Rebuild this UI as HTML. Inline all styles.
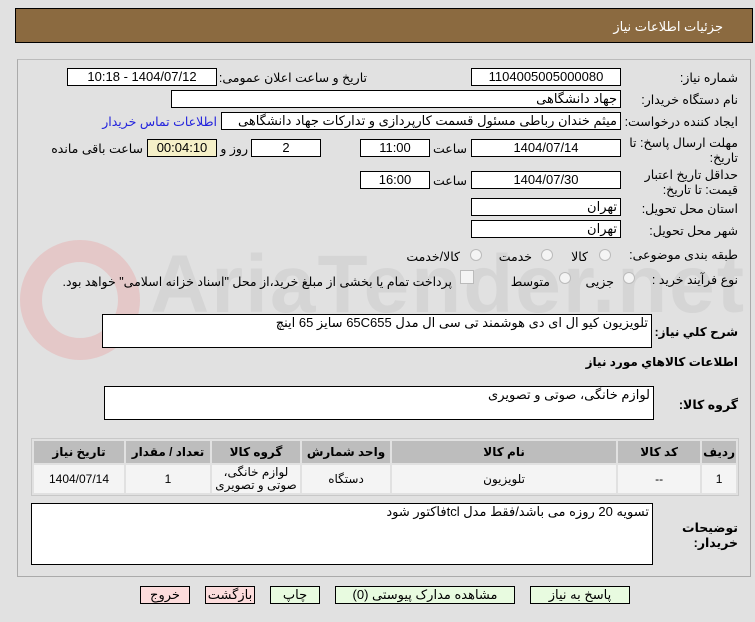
<!DOCTYPE html>
<html><head><meta charset="utf-8"><style>
body{margin:0;width:755px;height:622px;background:#e1e1e1;font-family:"Liberation Sans","DejaVu Sans",sans-serif;font-size:12px;color:#000;position:relative;overflow:hidden;direction:rtl}
.a{position:absolute;white-space:nowrap}
.b{position:absolute;background:#fff;border:1px solid #000;box-sizing:border-box;height:18px;line-height:16px;text-align:center;font-size:13px}
.b.r{text-align:right;padding-right:3px}
.l{position:absolute;white-space:nowrap;font-size:12.5px}
.rad{position:absolute;width:12px;height:12px;border-radius:50%;border:1px solid #bbb;background:#f4f4f4;box-sizing:border-box}
.btn{position:absolute;top:586px;height:18px;border:1px solid #000;box-sizing:border-box;text-align:center;line-height:16px;font-size:13px}
table{border-collapse:separate;border-spacing:2px}
</style></head><body>
<div class="a" style="left:15px;top:8px;width:738px;height:35px;background:#8b6a40;border:1px solid #000;box-sizing:border-box"></div>
<div class="a" style="right:32px;top:19px;color:#fff;font-size:13px">جزئیات اطلاعات نیاز</div>
<div class="a" style="left:17px;top:59px;width:734px;height:518px;border:1px solid #aaa;border-top-color:#bbb;box-sizing:border-box;background:#e1e1e1"></div>
<div class="a" style="left:20px;top:240px;width:120px;height:120px;border:22px solid #e8b0b0;border-radius:50%;box-sizing:border-box;opacity:.5;direction:ltr"></div>
<div class="a" style="left:150px;top:238px;font-size:82px;font-weight:bold;color:#c8c8c8;opacity:.45;direction:ltr;letter-spacing:2px">AriaTender.net</div>

<div class="l" style="right:17px;top:70px">شماره نیاز:</div>
<div class="b" style="left:471px;top:68px;width:150px">1104005005000080</div>
<div class="l" style="right:388px;top:70px">تاریخ و ساعت اعلان عمومی:</div>
<div class="b" style="left:67px;top:68px;width:150px">1404/07/12 - 10:18</div>

<div class="l" style="right:17px;top:92px">نام دستگاه خریدار:</div>
<div class="b r" style="left:171px;top:90px;width:450px">جهاد دانشگاهی</div>

<div class="l" style="right:17px;top:114px">ایجاد کننده درخواست:</div>
<div class="b r" style="left:221px;top:112px;width:400px">میثم خندان رباطی مسئول قسمت کارپردازی و تدارکات جهاد دانشگاهی</div>
<div class="l" style="right:538px;top:114px;color:#2222dd">اطلاعات تماس خریدار</div>

<div class="l" style="right:17px;top:135px;text-align:right">مهلت ارسال پاسخ: تا<br>تاریخ:</div>
<div class="b" style="left:471px;top:139px;width:150px">1404/07/14</div>
<div class="l" style="right:288px;top:141px">ساعت</div>
<div class="b" style="left:360px;top:139px;width:70px">11:00</div>
<div class="b" style="left:251px;top:139px;width:70px">2</div>
<div class="l" style="right:507px;top:141px">روز و</div>
<div class="b" style="left:147px;top:139px;width:70px;background:#f5f0c8">00:04:10</div>
<div class="l" style="right:612px;top:141px">ساعت باقی مانده</div>

<div class="l" style="right:17px;top:168px;text-align:right;line-height:15px">حداقل تاریخ اعتبار<br>قیمت: تا تاریخ:</div>
<div class="b" style="left:471px;top:171px;width:150px">1404/07/30</div>
<div class="l" style="right:288px;top:173px">ساعت</div>
<div class="b" style="left:360px;top:171px;width:70px">16:00</div>

<div class="l" style="right:17px;top:201px">استان محل تحویل:</div>
<div class="b r" style="left:471px;top:198px;width:150px">تهران</div>
<div class="l" style="right:17px;top:223px">شهر محل تحویل:</div>
<div class="b r" style="left:471px;top:220px;width:150px">تهران</div>

<div class="l" style="right:17px;top:247px">طبقه بندی موضوعی:</div>
<div class="rad" style="left:599px;top:249px"></div><div class="l" style="right:167px;top:249px">کالا</div>
<div class="rad" style="left:541px;top:249px"></div><div class="l" style="right:223px;top:249px">خدمت</div>
<div class="rad" style="left:470px;top:249px"></div><div class="l" style="right:295px;top:249px">کالا/خدمت</div>

<div class="l" style="right:17px;top:272px">نوع فرآیند خرید :</div>
<div class="rad" style="left:623px;top:272px"></div><div class="l" style="right:141px;top:274px">جزیی</div>
<div class="rad" style="left:559px;top:272px"></div><div class="l" style="right:205px;top:274px">متوسط</div>
<div class="a" style="left:460px;top:270px;width:12px;height:12px;border:1px solid #bbb;background:#f4f4f4"></div>
<div class="l" style="right:303px;top:274px">پرداخت تمام یا بخشی از مبلغ خرید،از محل "اسناد خزانه اسلامی" خواهد بود.</div>

<div class="l" style="right:17px;top:325px;font-weight:bold;font-size:12px">شرح کلي نياز:</div>
<div class="b r" style="left:102px;top:314px;width:550px;height:34px;text-align:right">تلویزیون کیو ال ای دی هوشمند تی سی ال مدل 65C655 سایز 65 اینچ</div>
<div class="l" style="right:17px;top:355px;font-weight:bold;font-size:12px">اطلاعات کالاهاي مورد نياز</div>
<div class="l" style="right:17px;top:397px;font-weight:bold">گروه کالا:</div>
<div class="b r" style="left:104px;top:386px;width:550px;height:34px;text-align:right">لوازم خانگی، صوتی و تصویری</div>

<div class="a" style="left:31px;top:438px;width:708px;height:58px;border:1px solid #c8c8c8;box-sizing:border-box;background:#e1e1e1">
<table style="width:100%;font-size:12px;text-align:center">
<tr style="background:#bdbdbd;font-weight:bold;height:22px"><td style="width:26px">ردیف</td><td style="width:80px">کد کالا</td><td>نام کالا</td><td style="width:86px">واحد شمارش</td><td style="width:86px">گروه کالا</td><td style="width:82px">تعداد / مقدار</td><td style="width:88px">تاریخ نیاز</td></tr>
<tr style="background:#f4f4f4;height:28px;line-height:13px"><td>1</td><td>--</td><td>تلویزیون</td><td>دستگاه</td><td>لوازم خانگی،<br>صوتی و تصویری</td><td>1</td><td>1404/07/14</td></tr>
</table></div>

<div class="l" style="right:17px;top:521px;font-weight:bold;text-align:right;line-height:15px">توضیحات<br>خریدار:</div>
<div class="b r" style="left:31px;top:503px;width:622px;height:62px;text-align:right">تسویه 20 روزه می باشد/فقط مدل tclفاکتور شود</div>

<div class="btn" style="left:530px;width:100px;background:#e8fbe0">پاسخ به نیاز</div>
<div class="btn" style="left:335px;width:180px;background:#e8fbe0">مشاهده مدارک پیوستی (0)</div>
<div class="btn" style="left:270px;width:50px;background:#e8fbe0">چاپ</div>
<div class="btn" style="left:205px;width:50px;background:#fcdcdc">بازگشت</div>
<div class="btn" style="left:140px;width:50px;background:#fcdcdc">خروج</div>
</body></html>
